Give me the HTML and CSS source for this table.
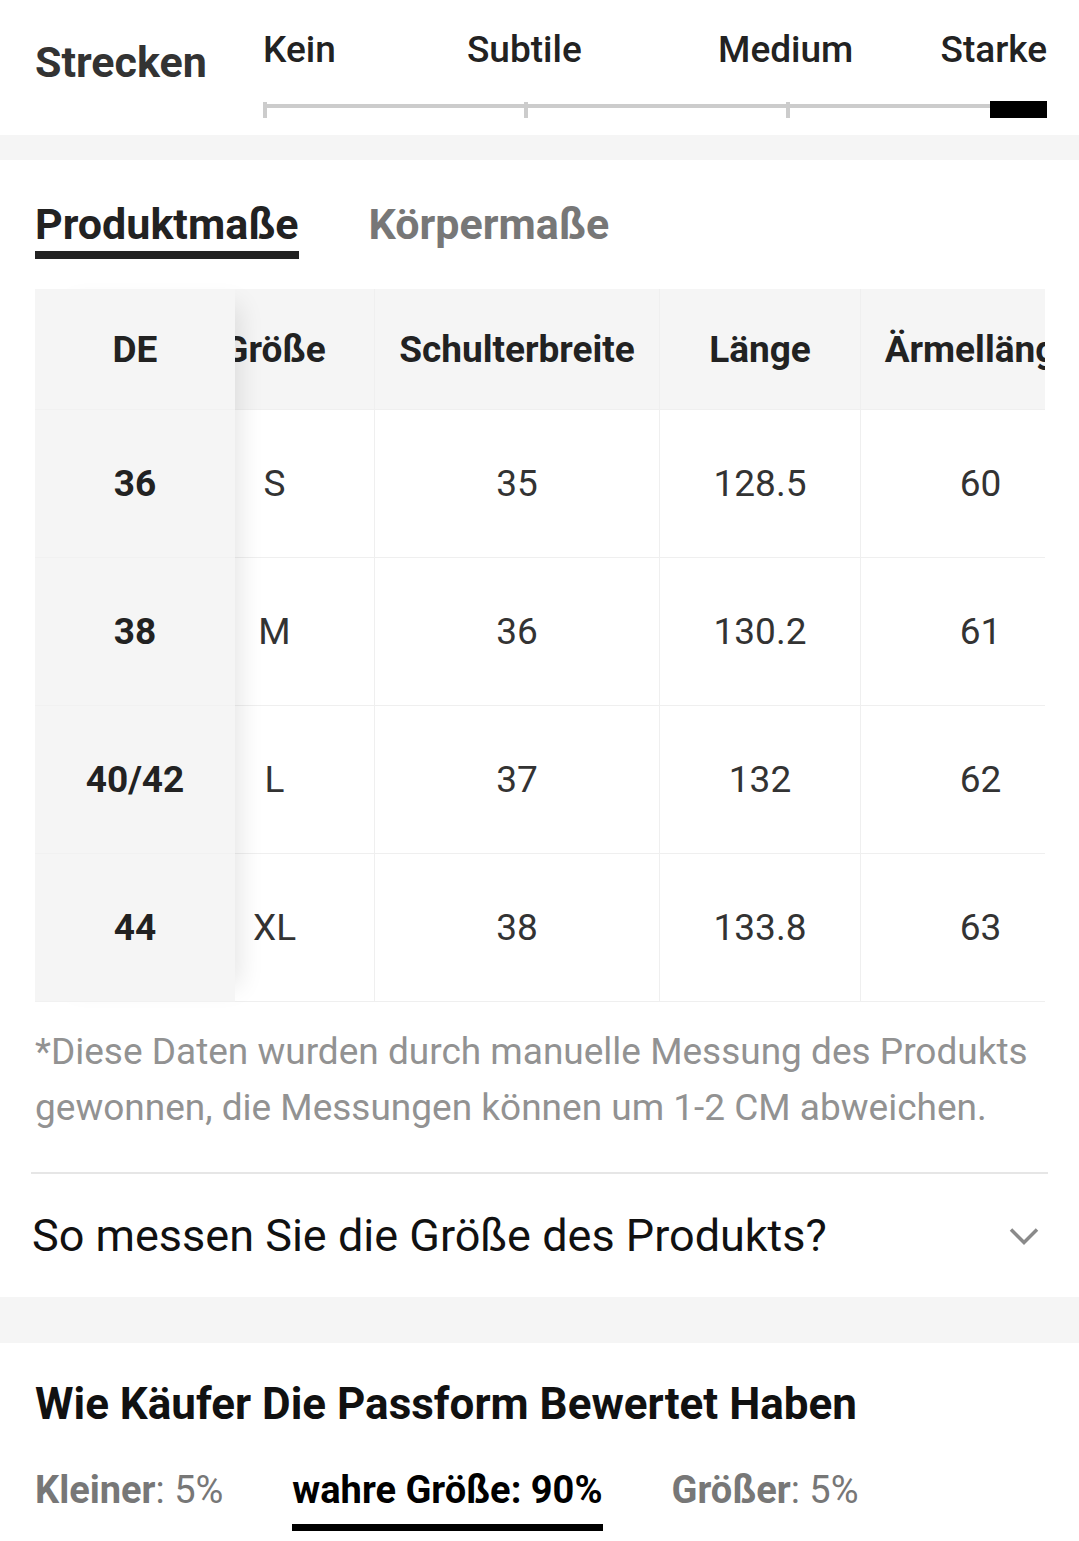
FILE: index.html
```html
<!DOCTYPE html>
<html lang="de">
<head>
<meta charset="utf-8">
<title>Größe</title>
<link rel="stylesheet" href="styles.css">
</head>
<body>
<section class="stretch">
  <h2 class="stretch-title">Strecken</h2>
  <div class="slider">
    <div class="slider-labels">
      <span class="lbl lbl-start">Kein</span>
      <span class="lbl lbl-mid1">Subtile</span>
      <span class="lbl lbl-mid2">Medium</span>
      <span class="lbl lbl-end">Starke</span>
    </div>
    <div class="track">
      <span class="seg"></span>
      <span class="seg"></span>
      <span class="seg seg-last"></span>
    </div>
  </div>
</section>

<div class="band band-top"></div>

<section class="sizes">
  <nav class="tabs">
    <span class="tab active">Produktmaße</span>
    <span class="tab">Körpermaße</span>
  </nav>

  <div class="size-table">
    <div class="col-fixed">
      <div class="cell head">DE</div>
      <div class="cell strong">36</div>
      <div class="cell strong">38</div>
      <div class="cell strong">40/42</div>
      <div class="cell strong">44</div>
    </div>
    <div class="scroll">
      <div class="grid">
        <div class="cell head">Größe</div>
        <div class="cell head">Schulterbreite</div>
        <div class="cell head">Länge</div>
        <div class="cell head">Ärmellänge</div>

        <div class="cell">S</div>
        <div class="cell">35</div>
        <div class="cell">128.5</div>
        <div class="cell">60</div>

        <div class="cell">M</div>
        <div class="cell">36</div>
        <div class="cell">130.2</div>
        <div class="cell">61</div>

        <div class="cell">L</div>
        <div class="cell">37</div>
        <div class="cell">132</div>
        <div class="cell">62</div>

        <div class="cell">XL</div>
        <div class="cell">38</div>
        <div class="cell">133.8</div>
        <div class="cell">63</div>
      </div>
    </div>
  </div>

  <p class="note">*Diese Daten wurden durch manuelle Messung des Produkts gewonnen, die Messungen können um 1-2 CM abweichen.</p>

  <div class="accordion">
    <span class="acc-text">So messen Sie die Größe des Produkts?</span>
    <svg class="chevron" width="30" height="18" viewBox="0 0 30 18" aria-hidden="true">
      <path d="M2 2.5 L15 15.5 L28 2.5" fill="none" stroke="#8a8a8a" stroke-width="3.5"/>
    </svg>
  </div>
</section>

<div class="band band-mid"></div>

<section class="fit">
  <h2 class="fit-title">Wie Käufer Die Passform Bewertet Haben</h2>
  <div class="ratings">
    <span class="rating"><b>Kleiner</b>: 5%</span>
    <span class="rating active"><b>wahre Größe</b><b>: 90%</b></span>
    <span class="rating"><b>Größer</b>: 5%</span>
  </div>
</section>
</body>
</html>
```

FILE: styles.css
```css
* { box-sizing: border-box; }

html, body {
  margin: 0;
  padding: 0;
  background: #fff;
  font-family: Roboto, "Liberation Sans", Arial, sans-serif;
  color: #222;
}

/* ---------- Strecken ---------- */
.stretch {
  height: 135px;
  display: flex;
  padding: 0 32px 0 35px;
}

.stretch-title {
  margin: 37px 0 0;
  width: 228px;
  font-size: 43px;
  line-height: 50px;
  font-weight: 700;
  color: #333;
}

.slider {
  flex: 1;
  padding-top: 29px;
}

.slider-labels {
  display: grid;
  grid-template-columns: repeat(6, 1fr);
  font-size: 37px;
  line-height: 42px;
  font-weight: 500;
  color: #222;
}

.lbl-start { grid-column: 1; justify-self: start; }
.lbl-mid1 { grid-column: 2 / span 2; justify-self: center; }
.lbl-mid2 { grid-column: 4 / span 2; justify-self: center; }
.lbl-end { grid-column: 6; justify-self: end; }

.track {
  display: flex;
  height: 17px;
  margin-top: 30px;
}

.seg {
  flex: 1;
  background:
    linear-gradient(#cccccc, #cccccc) 0 1px / 4px 16px no-repeat,
    linear-gradient(#cccccc, #cccccc) 0 3px / 100% 4px no-repeat;
}

.seg-last {
  background:
    linear-gradient(#000, #000) right 0 top 0 / 57px 17px no-repeat,
    linear-gradient(#cccccc, #cccccc) 0 1px / 4px 16px no-repeat,
    linear-gradient(#cccccc, #cccccc) 0 3px / 100% 4px no-repeat;
}

/* ---------- bands ---------- */
.band { background: #f5f5f5; }
.band-top { height: 25px; }
.band-mid { height: 46px; }

/* ---------- tabs ---------- */
.tabs {
  display: flex;
  gap: 70px;
  padding: 39px 0 0 35px;
}

.tab {
  font-size: 43px;
  line-height: 50px;
  font-weight: 700;
  color: #777;
  padding-bottom: 2px;
  border-bottom: 8px solid transparent;
}

.tab.active {
  color: #222;
  border-bottom-color: #222;
}

/* ---------- table ---------- */
.size-table {
  display: flex;
  width: 1010px;
  margin: 30px 0 0 35px;
}

.cell {
  height: 148px;
  display: flex;
  align-items: center;
  justify-content: center;
  font-size: 37px;
  color: #333;
  border-bottom: 1px solid #efefef;
  white-space: nowrap;
}

.cell.head {
  height: 121px;
  background: #f5f5f5;
  font-weight: 700;
  color: #222;
}

.col-fixed {
  width: 200px;
  flex: none;
  position: relative;
  z-index: 1;
  background: #f5f5f5;
  box-shadow: 20px 0 24px -16px rgba(0, 0, 0, 0.11);
}

.col-fixed .cell {
  border-bottom-color: #f1f1f1;
}

.cell.strong {
  font-weight: 700;
  color: #222;
}

.scroll {
  flex: 1;
  overflow: hidden;
}

.grid {
  display: grid;
  grid-template-columns: 200px 285px 201px 240px;
  margin-left: -60px;
  width: 926px;
}

.grid .cell {
  border-right: 1px solid #efefef;
}

/* ---------- note ---------- */
.note {
  margin: 22px 35px 0;
  font-size: 37px;
  line-height: 56px;
  color: #929292;
}

/* ---------- accordion ---------- */
.accordion {
  margin: 36px 31px 0 31px;
  border-top: 2px solid #e6e6e6;
  height: 125px;
  display: flex;
  align-items: center;
  justify-content: space-between;
  padding: 0 9px 0 1px;
}

.acc-text {
  font-size: 45px;
  line-height: 50px;
  color: #111;
}

/* ---------- fit ---------- */
.fit {
  padding: 36px 35px 0;
}

.fit-title {
  margin: 0;
  font-size: 44px;
  line-height: 50px;
  font-weight: 700;
  color: #111;
}

.ratings {
  display: flex;
  gap: 69px;
  margin-top: 39px;
}

.rating {
  font-size: 38px;
  line-height: 44px;
  color: #777;
  padding-bottom: 12px;
  border-bottom: 7px solid transparent;
}

.rating b { font-weight: 700; }

.rating.active {
  color: #000;
  border-bottom-color: #000;
}
```
